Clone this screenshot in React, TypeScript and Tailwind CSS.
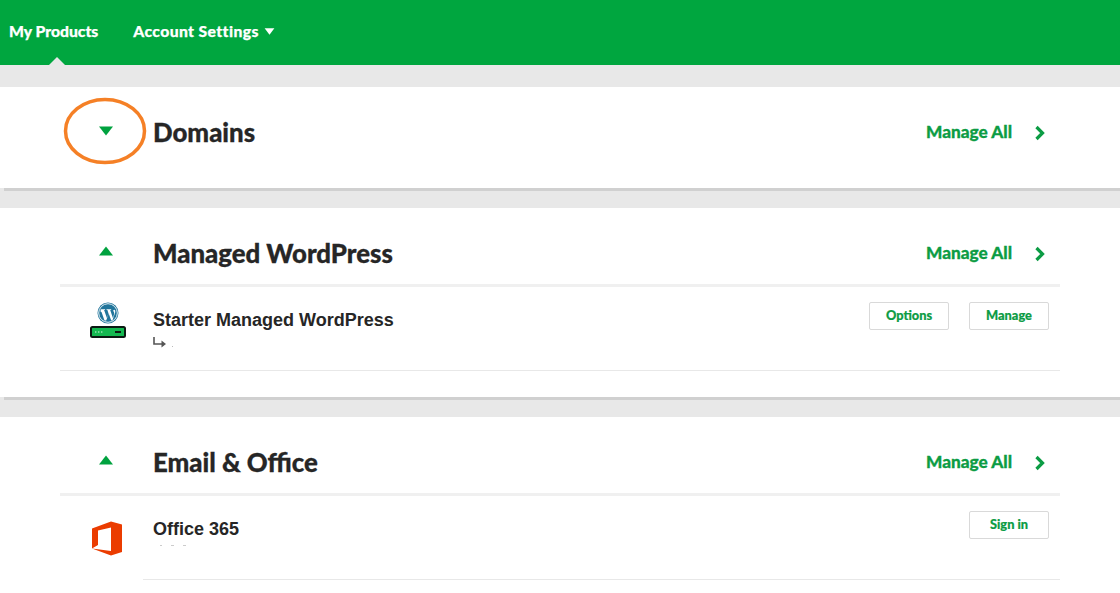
import React from "react";

const head = { fontFamily: '"Lato", "Liberation Sans", sans-serif' };
const body = { fontFamily: '"Liberation Sans", Arial, sans-serif' };

function Tri({ up, className }: { up?: boolean; className: string }) {
  return (
    <svg viewBox="0 0 14 10" className={className} aria-hidden="true">
      <path d={up ? "M7 0.5 14 9.5H0Z" : "M0 0.5H14L7 9.5Z"} fill="currentColor" />
    </svg>
  );
}

function SectionHead({ title }: { title: string }) {
  return (
    <div className="flex h-[76px] items-center pt-[11px]">
      <div className="flex w-[92px] justify-center pb-[5px]">
        <Tri up className="h-[10px] w-[14px] text-[#00a23f]" />
      </div>
      <h2 className="ml-px text-[25.8px] font-black leading-none text-[#262626] [-webkit-text-stroke:0.3px_#262626]" style={head}>{title}</h2>
      <div className="ml-auto -mt-[1px]">
        <ManageAll />
      </div>
    </div>
  );
}

function ManageAll() {
  return (
    <div className="flex items-center pr-[14px]">
      <span className="text-[17.2px] font-black text-[#0c9c44] [-webkit-text-stroke:0.3px_#0c9c44]" style={head}>Manage All</span>
      <svg viewBox="0 0 12 16" className="ml-[22px] mt-[3px] h-[16px] w-[12px]" aria-hidden="true">
        <path d="M2.5 2 8.5 8 2.5 14" fill="none" stroke="#0c9c44" strokeWidth="3.2" />
      </svg>
    </div>
  );
}

function Btn({ children }: { children: React.ReactNode }) {
  return (
    <button className="flex h-[28px] w-[80px] items-center justify-center rounded-[2px] border border-[#d9d9d9] bg-white text-[12.8px] font-black text-[#0c9c44] [-webkit-text-stroke:0.2px_#0c9c44]" style={head}>
      {children}
    </button>
  );
}

function WpIcon() {
  return (
    <svg viewBox="0 0 36 36" className="h-[36px] w-[36px]" aria-hidden="true">
      <circle cx="18" cy="11" r="10.5" fill="#21759b" />
      <circle cx="18" cy="11" r="9.3" fill="none" stroke="#fff" strokeWidth="0.9" />
      <path d="M10.6 7.2h4.6l-.2.7-.9.1 2.8 8 1.6-4.6-1.1-3.4-.9-.1.1-.7h4.6l-.1.7-.9.1 2.7 7.9 1.1-3.4c.5-1.6-.1-2.6-.6-3.3-.4-.6.1-1.4.8-1.4 1 0 1.3 1.2 1 2.6l-2.8 8.1h-1.2l-2.5-7-2.5 7H14.5l-3-8.6-.9-.1z" fill="#fff" />
      <rect x="1" y="25" width="34" height="10" rx="1.5" fill="#14b850" stroke="#0b1a12" strokeWidth="2" />
      <path d="M5 30h1.4M8 30h1.4M11 30h1.4" stroke="#d8f5e2" strokeWidth="1.2" />
      <path d="M25 30h6" stroke="#0b1a12" strokeWidth="2" />
    </svg>
  );
}

function OfficeIcon() {
  return (
    <svg viewBox="0 0 30 35" className="h-[35px] w-[30px]" aria-hidden="true">
      <path d="M0 7.5 19 0.5 30 3.5V31L19 34.5 0 27.5 19 30V6.5L6 9.5V24L0 27.5Z" fill="#eb3c00" />
    </svg>
  );
}

export default function App() {
  return (
    <div className="h-[593px] w-[1120px] overflow-hidden bg-[#e8e8e8]">
      <header className="relative flex h-[65px] bg-[#00a63f] text-white" style={head}>
        <div className="flex h-[63px] items-center pl-[9px] text-[15.7px] font-black [-webkit-text-stroke:0.25px_#fff]">
          <span>My Products</span>
          <span className="ml-[35px] tracking-[0.4px]">Account Settings</span>
          <Tri className="ml-[5px] h-[7px] w-[11px] text-white" />
        </div>
        <div className="absolute bottom-0 left-[49px] h-0 w-0 border-x-[8px] border-b-[8px] border-x-transparent border-b-[#e8e8e8]" />
      </header>

      <main className="pt-[22px]">
        <section className="relative h-[101px] bg-white">
          <div className="mx-[60px] flex h-full items-start pt-[35px]">
            <div className="flex h-[20px] w-[92px] items-center justify-center pb-[3px]">
              <Tri className="h-[10px] w-[14px] text-[#00a23f]" />
            </div>
            <h2 className="ml-px text-[25.8px] font-black leading-[20px] text-[#262626] [-webkit-text-stroke:0.3px_#262626]" style={head}>Domains</h2>
            <div className="ml-auto -mt-[3px]">
              <ManageAll />
            </div>
          </div>
          <svg viewBox="0 0 84 68" className="absolute left-[63px] top-[10px] h-[68px] w-[84px]" aria-hidden="true">
            <ellipse cx="42" cy="34" rx="39.5" ry="31.5" fill="none" stroke="#f58026" strokeWidth="3.5" />
          </svg>
        </section>
        <div className="ml-[4px] h-[3px] bg-[#d0d0d0]" />

        <section className="mt-[17px] h-[189px] bg-white">
          <div className="mx-[60px]">
            <div className="h-[79px] border-b-[3px] border-[#f0f0f0] pt-[2px]">
              <SectionHead title="Managed WordPress" />
            </div>
            <div className="flex h-[84px] border-b border-[#e8e8e8]">
              <div className="flex w-[93px] justify-center pt-[15px] pl-[2px]">
                <WpIcon />
              </div>
              <div className="pt-[22px]">
                <div className="text-[18px] font-bold leading-[22px] text-[#262626]" style={body}>Starter Managed WordPress</div>
                <div className="mt-[6px] flex items-end gap-[5px]">
                  <svg viewBox="0 0 14 11" className="h-[11px] w-[14px]" aria-hidden="true">
                    <path d="M1 0v7h8" fill="none" stroke="#555" strokeWidth="1.6" />
                    <path d="M8.5 3.5 13 7l-4.5 3.5z" fill="#555" />
                  </svg>
                  <span className="mb-[1px] h-[1px] w-[1px] bg-[#bbbbbb]" />
                </div>
              </div>
              <div className="ml-auto flex gap-[20px] pr-[11px] pt-[15px]">
                <Btn>Options</Btn>
                <Btn>Manage</Btn>
              </div>
            </div>
          </div>
        </section>
        <div className="ml-[4px] h-[3px] bg-[#d0d0d0]" />

        <section className="mt-[17px] h-[176px] bg-white">
          <div className="mx-[60px]">
            <div className="h-[79px] border-b-[3px] border-[#f0f0f0] pt-[2px]">
              <SectionHead title="Email & Office" />
            </div>
            <div className="flex h-[84px]">
              <div className="flex w-[83px] justify-center pt-[25px] pl-[10px]">
                <OfficeIcon />
              </div>
              <div className="flex-1 border-b border-[#e8e8e8] pl-[10px]">
                <div className="flex">
                  <div className="pt-[22px]">
                    <div className="text-[18px] font-bold leading-[22px] text-[#262626]" style={body}>Office 365</div>
                    <div className="mt-[5px] flex gap-[9px] pl-[7px]">
                      <span className="h-[1px] w-[2px] bg-[#cccccc]" />
                      <span className="h-[1px] w-[3px] bg-[#cccccc]" />
                      <span className="h-[1px] w-[3px] bg-[#cccccc]" />
                    </div>
                  </div>
                  <div className="ml-auto pr-[11px] pt-[15px]">
                    <Btn>Sign in</Btn>
                  </div>
                </div>
              </div>
            </div>
          </div>
        </section>
      </main>
    </div>
  );
}
